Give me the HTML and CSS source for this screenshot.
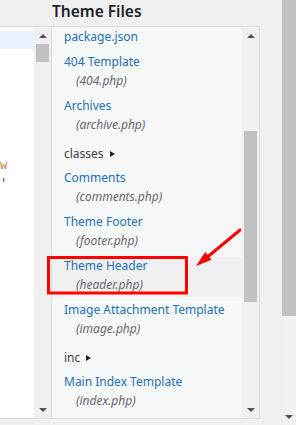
FILE: index.html
```html
<!DOCTYPE html>
<html lang="en">
  <head>
    <meta charset="UTF-8" />
    <meta name="viewport" content="width=device-width, initial-scale=1.0" />
    <title>Theme Files</title>
    <link rel="stylesheet" href="styles.css">
  </head>
  <body>
    <div class="page">
      <div class="main">
        <h2 class="title">Theme Files</h2>
        <div class="workspace">
          <div class="editor">
            <div class="code">
              <div class="line active"></div>
              <div class="line"></div>
              <div class="line"></div>
              <div class="line"></div>
              <div class="line"></div>
              <div class="line"></div>
              <div class="line"></div>
              <div class="line"><span class="tok-attr">w</span></div>
              <div class="line"><span class="tok-punct">'</span></div>
            </div>
            <div class="scrollbar">
              <div class="scroll-btn"><span class="arrow-up"></span></div>
              <div class="thumb code-thumb"></div>
              <div class="scroll-fill"></div>
              <div class="scroll-btn"><span class="arrow-down"></span></div>
            </div>
          </div>
          <div class="files">
            <ul class="file-list">
              <li class="file single"><a href="#">package.json</a></li>
              <li class="file"><a href="#">404 Template</a><span class="file-path">(404.php)</span></li>
              <li class="file"><a href="#">Archives</a><span class="file-path">(archive.php)</span></li>
              <li class="folder">classes <span class="caret"></span></li>
              <li class="file"><a href="#">Comments</a><span class="file-path">(comments.php)</span></li>
              <li class="file"><a href="#">Theme Footer</a><span class="file-path">(footer.php)</span></li>
              <li class="file current"><a href="#">Theme Header</a><span class="file-path">(header.php)</span></li>
              <li class="file"><a href="#">Image Attachment Template</a><span class="file-path">(image.php)</span></li>
              <li class="folder">inc <span class="caret"></span></li>
              <li class="file"><a href="#">Main Index Template</a><span class="file-path">(index.php)</span></li>
            </ul>
            <div class="scrollbar">
              <div class="scroll-btn"><span class="arrow-up"></span></div>
              <div class="thumb files-thumb"></div>
              <div class="scroll-fill"></div>
              <div class="scroll-btn"><span class="arrow-down"></span></div>
            </div>
          </div>
        </div>
      </div>
      <div class="page-scroll">
        <div class="page-thumb"></div>
        <div class="scroll-fill"></div>
        <div class="scroll-btn"><span class="arrow-down"></span></div>
      </div>

      <!-- annotation drawn over the screenshot -->
      <svg class="annotation" width="296" height="425" viewBox="0 0 296 425">
        <rect x="48.5" y="257.5" width="138" height="35.5" fill="none" stroke="#ff0000" stroke-width="3" />
        <line x1="240" y1="230" x2="205" y2="259" stroke="#ff0000" stroke-width="3" stroke-linecap="round" />
        <polygon points="196,266 211.6,259.8 205.2,252" fill="#ff0000" />
      </svg>
    </div>
  </body>
</html>
```

FILE: styles.css
```css
:root {
  --page-bg: #f0f0f1;
  --border: #dcdcde;
  --link: #2271b1;
  --text: #1d2327;
  --muted: #646970;
  --track: #f0f0f0;
  --thumb: #c1c1c1;
  --arrow: #505050;
}
body {
  margin: 0;
  padding: 0;
  background-color: var(--page-bg);
  font-family: "Noto Sans", "Open Sans", sans-serif;
  color: var(--text);
}
.page {
  display: flex;
  width: 296px;
  height: 425px;
  overflow: hidden;
  position: relative;
}
.main {
  width: 282px;
}
.title {
  margin: 0 0 0 52px;
  height: 26px;
  font-size: 15.5px;
  line-height: 22px;
  font-weight: 600;
  color: var(--text);
}
.workspace {
  display: flex;
  width: 259px;
  height: 391px;
  border-top: 1px solid var(--border);
  border-bottom: 1px solid var(--border);
  border-right: 1px solid var(--border);
}
.editor {
  display: flex;
  width: 51px;
  border-right: 1px solid var(--border);
}
.code {
  width: 34px;
  padding-top: 4px;
  background-color: white;
  font-family: "Liberation Mono", monospace;
  font-size: 12px;
  overflow: hidden;
}
.line {
  height: 18px;
  line-height: 18px;
  white-space: pre;
}
.line.active {
  background-color: #e8f1fd;
}
.tok-attr {
  color: #c4813a;
}
.tok-punct {
  color: #555;
}
.scrollbar {
  display: flex;
  flex-direction: column;
  width: 17px;
  background-color: var(--track);
}
.scroll-btn {
  display: flex;
  justify-content: center;
  align-items: center;
  height: 17px;
  flex-shrink: 0;
}
.scroll-fill {
  flex-grow: 1;
}
.arrow-up,
.arrow-down {
  width: 0;
  height: 0;
  border-left: 4px solid transparent;
  border-right: 4px solid transparent;
}
.arrow-up {
  border-bottom: 4px solid var(--arrow);
}
.arrow-down {
  border-top: 4px solid var(--arrow);
}
.thumb {
  margin: 0 2px;
  background-color: var(--thumb);
  flex-shrink: 0;
}
.code-thumb {
  height: 18px;
}
.files-thumb {
  margin-top: 87px;
  height: 171px;
}
.files {
  display: flex;
  width: 207px;
  background-color: #f6f7f7;
}
.file-list {
  display: flex;
  flex-direction: column;
  gap: 4px;
  width: 190px;
  margin: 0;
  padding: 1px 0 0;
  list-style: none;
  overflow: hidden;
  font-size: 12px;
}
.file {
  display: flex;
  flex-direction: column;
  height: 40px;
  padding-left: 12px;
  flex-shrink: 0;
}
.file.single {
  height: 21px;
}
.file.current {
  background-color: var(--page-bg);
}
.file a {
  line-height: 18px;
  color: var(--link);
  text-decoration: none;
  white-space: nowrap;
}
.file-path {
  line-height: 20px;
  padding-left: 12px;
  font-style: italic;
  color: var(--muted);
}
.folder {
  display: flex;
  align-items: center;
  height: 18px;
  padding: 4px 0 2px 12px;
  line-height: 18px;
  color: #3c434a;
  flex-shrink: 0;
}
.caret {
  width: 0;
  height: 0;
  margin-left: 6px;
  border-top: 3.5px solid transparent;
  border-bottom: 3.5px solid transparent;
  border-left: 5px solid var(--text);
}
.page-scroll {
  display: flex;
  flex-direction: column;
  width: 14px;
  background-color: #f1f1f1;
}
.page-thumb {
  height: 316px;
  background-color: var(--thumb);
}
.annotation {
  position: absolute;
  top: 0;
  left: 0;
  pointer-events: none;
}
```
